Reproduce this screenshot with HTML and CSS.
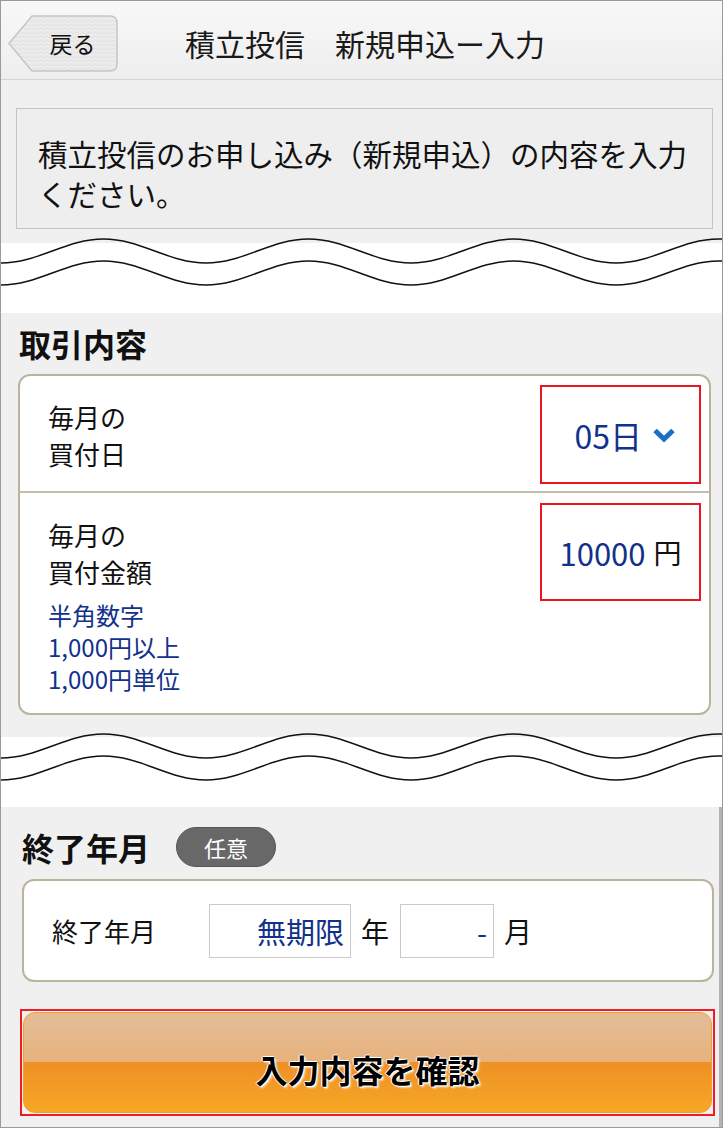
FILE: index.html
```html
<!DOCTYPE html>
<html lang="ja">

<head>
    <meta charset="UTF-8">
    <meta name="viewport" content="width=device-width, initial-scale=1.0">
    <title>積立投信 新規申込ー入力</title>
    <link rel="stylesheet" href="styles.css">
</head>

<body>
    <div class="frame">
        <header class="top-bar">
            <a class="back-btn">
                <svg class="back-bg" width="111" height="57" viewBox="0 0 111 57">
                    <defs>
                        <pattern id="zig" width="6" height="4" patternUnits="userSpaceOnUse">
                            <rect width="6" height="4" fill="#ececec"/>
                            <path d="M0,3 L3,1 L6,3" fill="none" stroke="#e0e0e0" stroke-width="1"/>
                        </pattern>
                    </defs>
                    <path d="M24,1 H102 Q109,1 109,8 V49 Q109,56 102,56 H24 L1,28.5 Z" fill="url(#zig)" stroke="#c6c6c6" stroke-width="1.5"/>
                </svg>
                <span>戻る</span>
            </a>
            <h1 class="title">積立投信　新規申込ー入力</h1>
        </header>

        <section class="intro">
            <div class="notice">積立投信のお申し込み（新規申込）の内容を入力<br>ください。</div>
        </section>

        <div class="wave">
            <svg width="721" height="60" viewBox="0 0 721 60">
                <g fill="none" stroke="#111" stroke-width="1.4">
                    <path d="M0,27 C37.3,27 65.2,3 102.5,3 S167.7,27 205,27 S270.2,3 307.5,3 S372.7,27 410,27 S475.2,3 512.5,3 S577.7,27 615,27 S680.2,3 717.5,3 S782.7,27 820,27"/>
                    <path transform="translate(0,22)" d="M0,27 C37.3,27 65.2,3 102.5,3 S167.7,27 205,27 S270.2,3 307.5,3 S372.7,27 410,27 S475.2,3 512.5,3 S577.7,27 615,27 S680.2,3 717.5,3 S782.7,27 820,27"/>
                </g>
            </svg>
        </div>

        <section class="group">
            <h2 class="group-title">取引内容</h2>
            <div class="card">
                <div class="row row-day">
                    <div class="label">毎月の<br>買付日</div>
                    <div class="mark mark-day">
                        <span class="val">05日</span>
                        <svg class="chev" width="24" height="16" viewBox="0 0 24 16">
                            <path d="M3,3.5 L12,12 L21,3.5" fill="none" stroke="#1d6fc4" stroke-width="5"/>
                        </svg>
                    </div>
                </div>
                <div class="row row-amount">
                    <div class="amount-left">
                        <div class="label">毎月の<br>買付金額</div>
                        <div class="note">半角数字<br>1,000円以上<br>1,000円単位</div>
                    </div>
                    <div class="mark mark-amount">
                        <span class="val">10000</span>
                        <span class="yen">円</span>
                    </div>
                </div>
            </div>
        </section>

        <div class="wave wave-low">
            <svg width="721" height="60" viewBox="0 0 721 60">
                <g fill="none" stroke="#111" stroke-width="1.4">
                    <path d="M0,27 C37.3,27 65.2,3 102.5,3 S167.7,27 205,27 S270.2,3 307.5,3 S372.7,27 410,27 S475.2,3 512.5,3 S577.7,27 615,27 S680.2,3 717.5,3 S782.7,27 820,27"/>
                    <path transform="translate(0,22)" d="M0,27 C37.3,27 65.2,3 102.5,3 S167.7,27 205,27 S270.2,3 307.5,3 S372.7,27 410,27 S475.2,3 512.5,3 S577.7,27 615,27 S680.2,3 717.5,3 S782.7,27 820,27"/>
                </g>
            </svg>
        </div>

        <section class="group group-end">
            <div class="group-head">
                <h2 class="group-title">終了年月</h2>
                <span class="badge">任意</span>
            </div>
            <div class="card card-end">
                <span class="end-label">終了年月</span>
                <span class="field field-year">無期限</span>
                <span class="unit">年</span>
                <span class="field field-month">-</span>
                <span class="unit">月</span>
            </div>
            <div class="submit-wrap">
                <div class="submit">入力内容を確認</div>
            </div>
        </section>
    </div>
</body>

</html>
```

FILE: styles.css
```css
* {
    margin: 0;
    padding: 0;
}

body {
    background-color: #fff;
    font-family: "Noto Sans CJK JP", "Noto Sans", sans-serif;
    color: #111;
}

.frame {
    width: 723px;
    height: 1128px;
    box-sizing: border-box;
    border: 1px solid #9a9a9a;
    display: flex;
    flex-direction: column;
    overflow: hidden;
}

/* header */
.top-bar {
    height: 79px;
    box-sizing: border-box;
    padding: 6px 0 0 7px;
    display: flex;
    align-items: center;
    background: linear-gradient(#f8f8f8, #eeeeee);
    border-bottom: 1px solid #d4d4d4;
}

.back-btn {
    position: relative;
    width: 111px;
    height: 57px;
    box-sizing: border-box;
    padding-left: 18px;
    display: flex;
    align-items: center;
    justify-content: center;
    font-size: 23px;
    color: #111;
}

.back-bg {
    position: absolute;
    top: 0;
    left: 0;
}

.back-btn span {
    position: relative;
}

.title {
    margin-left: 66px;
    font-size: 30px;
    font-weight: normal;
    color: #1a1a1a;
}

/* intro */
.intro {
    background-color: #f0f0f0;
    padding: 28px 0 14px 15px;
}

.notice {
    width: 697px;
    box-sizing: border-box;
    border: 1px solid #c4c4c4;
    background-color: #eeeeee;
    padding: 24px 0 15px 21px;
    font-size: 29.5px;
    line-height: 40px;
}

/* wave divider */
.wave {
    height: 70px;
    flex-shrink: 0;
    background-color: #fff;
}

.wave svg {
    display: block;
    margin-top: -7px;
}

.wave-low svg {
    margin-top: -6px;
}

/* groups */
.group {
    background-color: #f0f0f0;
    padding: 10px 0 22px 17px;
}

.group-title {
    margin: 0 0 11px 1px;
    font-size: 32px;
    line-height: 40px;
    font-weight: bold;
}

.card {
    width: 693px;
    box-sizing: border-box;
    border: 2px solid #bab49f;
    border-radius: 12px;
    background-color: #fff;
}

.row {
    display: flex;
    justify-content: space-between;
}

.row + .row {
    border-top: 2px solid #c4bfad;
}

.row-day {
    align-items: center;
    padding: 9px 8px 7px 28px;
}

.row-amount {
    align-items: flex-start;
    padding: 10px 8px 18px 28px;
}

.label {
    font-size: 26px;
    line-height: 37px;
}

.amount-left {
    padding-top: 13px;
}

.note {
    margin-top: 9px;
    font-size: 24px;
    line-height: 32px;
    color: #12318a;
}

.mark {
    width: 161px;
    box-sizing: border-box;
    border: 2px solid #e8161e;
    display: flex;
    align-items: center;
}

.mark-day {
    height: 99px;
    justify-content: flex-end;
    padding-right: 23px;
}

.mark-amount {
    height: 98px;
    justify-content: center;
}

.val {
    font-size: 31px;
    color: #12318a;
}

.mark-day .val {
    font-size: 32px;
}

.chev {
    margin-left: 10px;
}

.yen {
    margin-left: 8px;
    font-size: 28px;
}

/* end month */
.group-end {
    flex: 1;
    padding: 20px 0 10px 21px;
    border-right: 3px solid #b3b3b3;
}

.group-head {
    display: flex;
    align-items: center;
    margin-bottom: 12px;
}

.group-head .group-title {
    margin: 0;
}

.badge {
    margin-left: 26px;
    width: 100px;
    height: 40px;
    box-sizing: border-box;
    border: 1px solid #555;
    border-radius: 20px;
    background-color: #686868;
    color: #fff;
    font-size: 22px;
    line-height: 38px;
    text-align: center;
}

.card-end {
    width: 692px;
    height: 103px;
    display: flex;
    align-items: center;
    padding-left: 28px;
}

.end-label {
    width: 157px;
    font-size: 26px;
}

.field {
    height: 54px;
    box-sizing: border-box;
    border: 1px solid #cacaca;
    display: flex;
    align-items: center;
    justify-content: flex-end;
    padding-right: 6px;
    font-size: 29px;
    color: #12318a;
}

.field-year {
    width: 142px;
}

.field-month {
    width: 94px;
}

.unit {
    margin: 0 11px 0 10px;
    font-size: 28px;
}

/* submit */
.submit-wrap {
    margin: 27px 0 0 -2px;
    width: 695px;
    box-sizing: border-box;
    border: 2px solid #ee1c25;
    padding: 1px;
}

.submit {
    height: 101px;
    box-sizing: border-box;
    border: 1px solid #f2a12c;
    border-radius: 12px;
    background: linear-gradient(to bottom, #e3bd98 0%, #e7b27c 49%, #ee9026 50%, #f6a724 100%);
    padding-top: 12px;
    display: flex;
    align-items: center;
    justify-content: center;
    font-size: 32px;
    font-weight: bold;
    color: #000;
    text-shadow: 1px 1px 0 #fff, -1px 0 0 #fff, 0 -1px 0 #fff, 2px 2px 2px rgba(255, 255, 255, 0.7);
}
```
